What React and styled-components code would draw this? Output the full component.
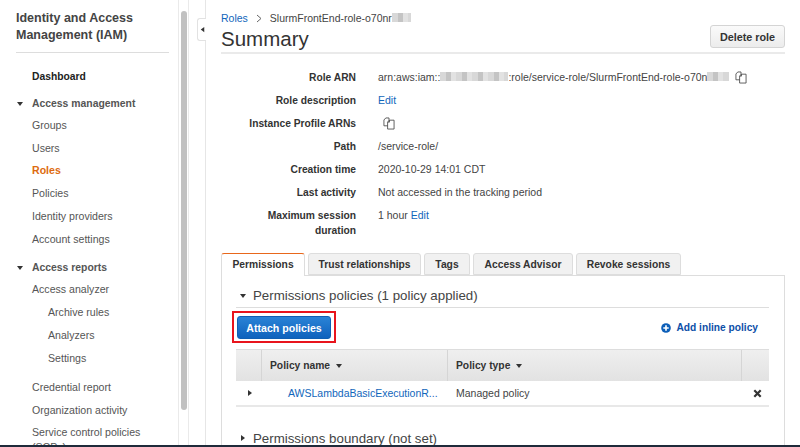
import React from "react";
import styled, { createGlobalStyle } from "styled-components";

const GlobalStyle = createGlobalStyle`
  html, body { margin: 0; padding: 0; background: #fff; }
  body { font-family: "Liberation Sans", Arial, sans-serif; color: #333; }
  * { box-sizing: border-box; }
`;

const Page = styled.div`
  width: 800px;
  height: 447px;
  overflow: hidden;
  display: flex;
  flex-direction: column;
`;

const Body = styled.div`
  flex: 1;
  min-height: 0;
  display: flex;
  overflow: hidden;
`;

const BottomBar = styled.div`
  height: 2px;
  flex: none;
  background: #1f2b3a;
`;

const Sidebar = styled.aside`
  width: 178px;
  flex: none;
  padding: 10px 9px 0 16px;
  overflow: hidden;
`;

const SideTitle = styled.div`
  font-size: 12.5px;
  line-height: 17px;
  font-weight: 700;
  color: #444;
  padding-bottom: 8px;
  border-bottom: 1px solid #ddd;
  margin-bottom: 13px;
`;

const NavItem = styled.div`
  height: 22.8px;
  line-height: 22.8px;
  font-size: ${(p) => (p.$strong ? 10.3 : 10.6)}px;
  white-space: nowrap;
  padding-left: ${(p) => (p.$sub ? 32 : 16)}px;
  margin-top: ${(p) => p.$top || 0}px;
  color: ${(p) => (p.$active ? "#dd6b10" : p.$strong ? "#222" : "#555")};
  font-weight: ${(p) => (p.$active || p.$strong ? 700 : 400)};
`;

const NavWrapItem = styled(NavItem)`
  height: 30px;
  line-height: 15px;
  padding-top: 4px;
`;

const NavHead = styled.div`
  height: 22px;
  padding-top: 2px;
  display: flex;
  align-items: center;
  gap: 8px;
  font-size: 10.4px;
  font-weight: 700;
  color: #555;
  margin-top: ${(p) => p.$top || 0}px;
  white-space: nowrap;
`;

const Gutter = styled.div`
  width: 11px;
  flex: none;
  padding: 11px 1px 35px 2px;
  border-left: 1px solid #eaeaea;
  border-right: 1px solid #eaeaea;
`;

const Thumb = styled.div`
  height: 100%;
  border-radius: 3px;
  background: #c1c1c1;
`;

const Strip = styled.div`
  width: 17px;
  flex: none;
  position: relative;
  border-right: 1px solid #e6e6e6;
`;

const Collapse = styled.div`
  position: absolute;
  right: -1px;
  top: 18px;
  width: 9px;
  height: 23px;
  background: #fff;
  border: 1px solid #e2e2e2;
  border-right: none;
  border-radius: 3px 0 0 3px;
  display: flex;
  align-items: center;
  justify-content: center;
`;

const Main = styled.main`
  flex: 1;
  min-width: 0;
  padding: 0 15px;
  overflow: hidden;
`;

const Header = styled.header`
  height: 54px;
  padding-top: 11px;
  display: flex;
  justify-content: space-between;
  border-bottom: 2px solid #eaeaea;
`;

const Crumbs = styled.div`
  font-size: 10.5px;
  line-height: 14px;
  display: flex;
  align-items: center;
  gap: 7px;
  color: #444;
`;

const Link = styled.a`
  color: ${(p) => (p.$dark ? "#0d4fa8" : "#1166bb")};
  font-weight: ${(p) => (p.$bold ? 700 : 400)};
`;

const Title = styled.h1`
  margin: 1px 0 0;
  font-size: 20.5px;
  line-height: 26px;
  font-weight: 400;
  color: #333;
`;

const DeleteButton = styled.button`
  width: 75px;
  height: 23px;
  margin-top: 14px;
  padding: 0;
  font: 700 10.8px "Liberation Sans", Arial, sans-serif;
  color: #333;
  border: 1px solid #d4d4d4;
  border-radius: 3px;
  background: linear-gradient(#fafafa, #ececec);
`;

const Details = styled.div`
  padding-top: 12px;
  display: grid;
  grid-template-columns: 135px 1fr;
  column-gap: 22px;
  grid-auto-rows: 23px;
  font-size: 10.5px;
  line-height: 23px;
`;

const Label = styled.div`
  font-weight: 700;
  font-size: 10.25px;
  color: #333;
  text-align: right;
  ${(p) => p.$tall && "grid-row: span 2; line-height: 15px; padding-top: 4px;"}
`;

const Value = styled.div`
  color: #444;
  display: flex;
  align-items: center;
  gap: ${(p) => p.$gap || 0}px;
  white-space: nowrap;
  ${(p) => p.$tall && "grid-row: span 2; align-items: flex-start;"}
`;

const Redacted = styled.span`
  display: inline-block;
  width: ${(p) => p.$w}px;
  height: 9px;
  background: repeating-linear-gradient(90deg, #d8d8d8 0 6px, #c4c4c4 6px 11px, #e2e2e2 11px 16px);
`;

const Tabs = styled.div`
  display: flex;
  gap: 3px;
  margin-top: 3px;
  height: 23px;
  position: relative;
  z-index: 1;
`;

const Tab = styled.div`
  width: ${(p) => p.$w}px;
  height: ${(p) => (p.$active ? 23 : 22)}px;
  line-height: 21px;
  text-align: center;
  font-size: 10.3px;
  font-weight: 700;
  color: #333;
  white-space: nowrap;
  background: ${(p) => (p.$active ? "#fff" : "#f1f1f1")};
  border: 1px solid #ddd;
  border-bottom: ${(p) => (p.$active ? "none" : "1px solid #ddd")};
  border-top: ${(p) => (p.$active ? "1px solid #e8671b" : "1px solid #ddd")};
  border-radius: 3px 3px 0 0;
`;

const Panel = styled.section`
  margin-top: -1px;
  width: 564px;
  height: 175px;
  padding: 10px 15px 0 14px;
  border: 1px solid #ddd;
  border-bottom: none;
`;

const AccordionHead = styled.div`
  display: flex;
  align-items: center;
  gap: 6px;
  height: ${(p) => p.$h}px;
  padding-left: 3px;
  font-size: 13.3px;
  color: #444;
  white-space: nowrap;
  ${(p) => p.$rule && "border-bottom: 1px solid #ddd; padding-bottom: 2px;"}
  ${(p) => p.$top && `margin-top: ${p.$top}px;`}
`;

const Actions = styled.div`
  height: 41px;
  padding: 3px 11px 0 0;
  display: flex;
  align-items: flex-start;
  justify-content: space-between;
`;

const Highlight = styled.div`
  border: 2px solid #e8141c;
  padding: 3px 3px 2px;
  margin-left: -4px;
`;

const PrimaryButton = styled.button`
  display: block;
  width: 94px;
  height: 23px;
  padding: 0;
  font: 700 10.6px "Liberation Sans", Arial, sans-serif;
  color: #fff;
  border: 1px solid #0f5fb3;
  border-radius: 3px;
  background: linear-gradient(#2a83d6, #0f62bd);
`;

const AddLink = styled(Link)`
  display: flex;
  align-items: center;
  gap: 5px;
  height: 23px;
  margin-top: 5px;
  font-size: 10.2px;
`;

const Table = styled.div`
  border-top: 1px solid #ddd;
  font-size: 10.5px;
`;

const HeadRow = styled.div`
  display: grid;
  grid-template-columns: 26px 186px 294px 1fr;
  height: 31px;
  background: linear-gradient(#efefef, #e2e2e2);
`;

const HeadCell = styled.div`
  display: flex;
  align-items: center;
  gap: 5px;
  padding-left: ${(p) => p.$pad || 0}px;
  font-size: 10.3px;
  font-weight: 700;
  color: #333;
  border-right: ${(p) => (p.$last ? "none" : "1px solid #d5d5d5")};
`;

const BodyRow = styled.div`
  display: grid;
  grid-template-columns: 26px 186px 294px 1fr;
  height: 26px;
  align-items: center;
  color: #444;
  border-bottom: 2px solid #e8e8e8;
`;

const Cell = styled.div`
  padding-left: ${(p) => p.$pad || 0}px;
  white-space: nowrap;
  display: flex;
  align-items: center;
`;

const Arrow = ({ dir = "down", size = 8, color = "#333" }) => {
  const points = { down: "1,2 7,2 4,6", right: "2,1 6,4 2,7", left: "6,1 2,4 6,7" }[dir];
  return (
    <svg width={size} height={size} viewBox="0 0 8 8" style={{ flex: "none" }}>
      <polygon points={points} fill={color} />
    </svg>
  );
};

const Chevron = () => (
  <svg width="8" height="9" viewBox="0 0 8 9" fill="none" stroke="#666" strokeWidth="1">
    <path d="M2 1 L6 4.5 L2 8" />
  </svg>
);

const CopyIcon = () => (
  <svg width="12" height="13" viewBox="0 0 13 14" fill="#fff" stroke="#444" strokeWidth="0.9">
    <path d="M1 3.2 L3 1 H6.5 V9.5 H1 Z" />
    <path d="M5 5.5 L7 3.4 H12 V13 H5 Z" />
    <path d="M7 3.4 V5.5 H5" fill="none" />
  </svg>
);

const PlusIcon = () => (
  <svg width="10" height="10" viewBox="0 0 11 11">
    <circle cx="5.5" cy="5.5" r="5.3" fill="#0d5fb8" />
    <path d="M5.5 2.5 V8.5 M2.5 5.5 H8.5" stroke="#fff" strokeWidth="1.8" />
  </svg>
);

const CloseIcon = () => (
  <svg width="9" height="9" viewBox="0 0 9 9">
    <path d="M1.3 1.3 L7.7 7.7 M7.7 1.3 L1.3 7.7" stroke="#333" strokeWidth="2.2" />
  </svg>
);

export default function App() {
  return (
    <>
      <GlobalStyle />
      <Page>
        <Body>
          <Sidebar>
            <SideTitle>
              Identity and Access
              <br />
              Management (IAM)
            </SideTitle>
            <NavItem $strong>Dashboard</NavItem>
            <NavHead $top={3}>
              <Arrow />
              Access management
            </NavHead>
            <NavItem>Groups</NavItem>
            <NavItem>Users</NavItem>
            <NavItem $active>Roles</NavItem>
            <NavItem>Policies</NavItem>
            <NavItem>Identity providers</NavItem>
            <NavItem>Account settings</NavItem>
            <NavHead $top={5}>
              <Arrow />
              Access reports
            </NavHead>
            <NavItem>Access analyzer</NavItem>
            <NavItem $sub $top={1}>Archive rules</NavItem>
            <NavItem $sub>Analyzers</NavItem>
            <NavItem $sub>Settings</NavItem>
            <NavItem $top={6}>Credential report</NavItem>
            <NavItem>Organization activity</NavItem>
            <NavWrapItem>
              Service control policies
              <br />
              (SCPs)
            </NavWrapItem>
          </Sidebar>
          <Gutter>
            <Thumb />
          </Gutter>
          <Strip>
            <Collapse>
              <Arrow dir="left" size={7} />
            </Collapse>
          </Strip>
          <Main>
            <Header>
              <div>
                <Crumbs>
                  <Link>Roles</Link>
                  <Chevron />
                  <span>
                    SlurmFrontEnd-role-o70nr
                    <Redacted $w={19} />
                  </span>
                </Crumbs>
                <Title>Summary</Title>
              </div>
              <DeleteButton>Delete role</DeleteButton>
            </Header>
            <Details>
              <Label>Role ARN</Label>
              <Value $gap={6}>
                <span>
                  arn:aws:iam::
                  <Redacted $w={68} />
                  :role/service-role/SlurmFrontEnd-role-o70n
                  <Redacted $w={22} />
                </span>
                <CopyIcon />
              </Value>
              <Label>Role description</Label>
              <Value>
                <Link>Edit</Link>
              </Value>
              <Label>Instance Profile ARNs</Label>
              <Value>
                <span style={{ width: 5 }} />
                <CopyIcon />
              </Value>
              <Label>Path</Label>
              <Value>/service-role/</Value>
              <Label>Creation time</Label>
              <Value>2020-10-29 14:01 CDT</Value>
              <Label>Last activity</Label>
              <Value>Not accessed in the tracking period</Value>
              <Label $tall>
                Maximum session
                <br />
                duration
              </Label>
              <Value $tall $gap={3}>
                1 hour <Link>Edit</Link>
              </Value>
            </Details>
            <Tabs>
              <Tab $active $w={84}>Permissions</Tab>
              <Tab $w={113}>Trust relationships</Tab>
              <Tab $w={46}>Tags</Tab>
              <Tab $w={100}>Access Advisor</Tab>
              <Tab $w={105}>Revoke sessions</Tab>
            </Tabs>
            <Panel>
              <AccordionHead $h={22} $rule>
                <Arrow />
                Permissions policies (1 policy applied)
              </AccordionHead>
              <Actions>
                <Highlight>
                  <PrimaryButton>Attach policies</PrimaryButton>
                </Highlight>
                <AddLink $dark $bold>
                  <PlusIcon />
                  Add inline policy
                </AddLink>
              </Actions>
              <Table>
                <HeadRow>
                  <HeadCell />
                  <HeadCell $pad={8}>
                    Policy name <Arrow />
                  </HeadCell>
                  <HeadCell $pad={8}>
                    Policy type <Arrow />
                  </HeadCell>
                  <HeadCell $last />
                </HeadRow>
                <BodyRow>
                  <Cell $pad={10}>
                    <Arrow dir="right" />
                  </Cell>
                  <Cell $pad={26}>
                    <Link>AWSLambdaBasicExecutionR...</Link>
                  </Cell>
                  <Cell $pad={8}>Managed policy</Cell>
                  <Cell $pad={11}>
                    <CloseIcon />
                  </Cell>
                </BodyRow>
              </Table>
              <AccordionHead $h={20} $top={21}>
                <Arrow dir="right" />
                Permissions boundary (not set)
              </AccordionHead>
            </Panel>
          </Main>
        </Body>
        <BottomBar />
      </Page>
    </>
  );
}
